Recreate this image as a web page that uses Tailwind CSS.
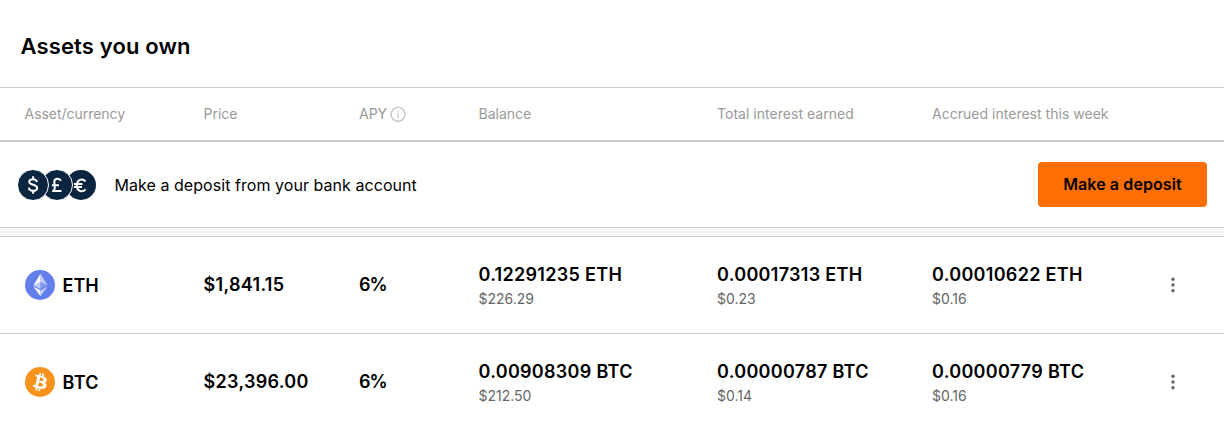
<!DOCTYPE html>
<html lang="en">
<head>
<meta charset="utf-8">
<title>Assets you own</title>
<script src="https://cdn.jsdelivr.net/npm/@tailwindcss/browser@4"></script>
</head>
<body class="bg-white text-black font-['Inter',sans-serif] w-[1224px] h-[424px] overflow-hidden">
<header class="h-[87px] pl-[20.5px] pt-[30px]"><h1 class="text-[22px] leading-8 font-semibold tracking-[0.14px] whitespace-nowrap">Assets you own</h1></header>
<div class="h-[55px] border-t border-b-2 border-[#cccccc] grid grid-cols-[179px_155.5px_119.5px_238.5px_215px_1fr] items-center pl-[24.5px] text-sm text-[#9a9a9a] whitespace-nowrap">
  <div class="tracking-[-0.03px]">Asset/currency</div>
  <div>Price</div>
  <div class="flex items-center gap-[2.5px]">APY
    <svg class="size-4" viewBox="0 0 16 16" fill="none" stroke="#c4c4c4"><circle cx="8" cy="8.3" r="6.9" stroke-width="1.4"/><path d="M8 7.1v5M8 4.3v1.3" stroke-width="1.3"/></svg>
  </div>
  <div>Balance</div>
  <div class="tracking-[0.03px]">Total interest earned</div>
  <div class="tracking-[0.02px]">Accrued interest this week</div>
</div>
<div class="h-[85px] flex items-center pl-[18px] pr-[17px]">
  <svg class="w-[78px] h-[30px]" viewBox="0 0 78 30" fill="none" stroke="#fff" stroke-linejoin="round">
    <circle cx="63" cy="15" r="15" fill="#0a2540" stroke="none"/>
    <path d="M67.6 11.4C64 7.7 58.8 9.7 58.8 15.4C58.8 21.1 64 23.1 67.6 19.4M56 13.9h8.5M56 17.1h8" stroke-width="2"/>
    <circle cx="39" cy="15" r="15.5" fill="#0a2540" stroke-width="1"/>
    <path d="M42.8 10.9C41.6 7.6 36.1 8 36.3 12C36.4 14.5 38.3 18.500 35 21.100H43.500M34 15.200h7" stroke-width="2"/>
    <circle cx="15" cy="15" r="15.5" fill="#0a2540" stroke-width="1"/>
    <path d="M19 12C18.300 8.200 11.200 8.300 11.200 11.800C11.200 15.800 19.200 13.700 19.200 17.900C19.200 21.700 11.300 21.800 10.800 17.600M15.100 6.300v3M15.100 20.700v3" stroke-width="2"/>
  </svg>
  <p class="ml-[18.5px] text-base tracking-[0.05px] whitespace-nowrap">Make a deposit from your bank account</p>
  <button class="ml-auto w-[169px] h-[45px] pb-[2px] rounded-[4px] bg-[#ff6e00] text-base font-semibold tracking-[0.1px]">Make a deposit</button>
</div>
<div class="h-[10px] border-y border-[#cccccc] bg-[#f7f7f7]"></div>
<div class="h-[97px] border-b border-[#cccccc] grid grid-cols-[179px_155.5px_119.5px_238.5px_215px_1fr_auto] items-center pl-[24.5px] pr-[47px] text-lg font-semibold tracking-[0.3px] whitespace-nowrap">
  <div class="flex items-center gap-[8px]">
    <svg class="size-[30px]" viewBox="0 0 32 32"><circle cx="16" cy="16" r="16" fill="#627eea"/><g fill="#fff"><path fill-opacity=".6" d="M16.498 4v8.87l7.497 3.35z"/><path d="M16.498 4L9 16.22l7.498-3.35z"/><path fill-opacity=".6" d="M16.498 21.968v6.027L24 17.616z"/><path d="M16.498 27.995v-6.028L9 17.616z"/><path fill-opacity=".2" d="M16.498 20.573l7.497-4.353-7.497-3.348z"/><path fill-opacity=".6" d="M9 16.22l7.498 4.353v-7.701z"/></g></svg>
    <span class="pt-[2px] tracking-normal">ETH</span>
  </div>
  <div>$1,841.15</div>
  <div class="tracking-[-1px]">6%</div>
  <div><div class="leading-7">0.12291235 ETH</div><div class="text-sm font-normal tracking-normal text-[#666666]">$226.29</div></div>
  <div><div class="leading-7">0.00017313 ETH</div><div class="text-sm font-normal tracking-normal text-[#666666]">$0.23</div></div>
  <div><div class="leading-7">0.00010622 ETH</div><div class="text-sm font-normal tracking-normal text-[#666666]">$0.16</div></div>
  <svg class="w-2 h-4" viewBox="0 0 8 16" fill="#666"><circle cx="4" cy="2.2" r="1.7"/><circle cx="4" cy="8" r="1.7"/><circle cx="4" cy="13.8" r="1.7"/></svg>
</div>
<div class="h-[96px] grid grid-cols-[179px_155.5px_119.5px_238.5px_215px_1fr_auto] items-center pl-[24.5px] pr-[47px] text-lg font-semibold tracking-[0.3px] whitespace-nowrap">
  <div class="flex items-center gap-[8px]">
    <svg class="size-[30px]" viewBox="0 0 32 32"><circle cx="16" cy="16" r="16" fill="#f7931a"/><path fill="#fff" d="M23.189 14.02c.314-2.096-1.283-3.223-3.465-3.975l.708-2.84-1.728-.43-.69 2.765c-.454-.114-.92-.22-1.385-.326l.695-2.783L15.596 6l-.708 2.839c-.376-.086-.746-.17-1.104-.26l.002-.009-2.384-.595-.46 1.846s1.283.294 1.256.312c.7.175.826.638.805 1.006l-.806 3.235c.048.012.11.03.18.057l-.183-.045-1.13 4.532c-.086.212-.303.531-.793.41.018.025-1.256-.313-1.256-.313l-.858 1.978 2.25.561c.418.105.828.215 1.231.318l-.715 2.872 1.727.43.708-2.84c.472.127.93.245 1.378.357l-.706 2.828 1.728.43.715-2.866c2.948.558 5.164.333 6.097-2.333.752-2.146-.037-3.385-1.588-4.192 1.13-.26 1.98-1.003 2.207-2.538zm-3.95 5.538c-.533 2.147-4.148.986-5.32.695l.95-3.805c1.172.293 4.929.872 4.37 3.11zm.535-5.569c-.487 1.953-3.495.96-4.47.717l.86-3.45c.975.243 4.118.696 3.61 2.733z"/></svg>
    <span class="pt-[2px]">BTC</span>
  </div>
  <div>$23,396.00</div>
  <div class="tracking-[-1px]">6%</div>
  <div><div class="leading-7">0.00908309 BTC</div><div class="text-sm font-normal tracking-normal text-[#666666]">$212.50</div></div>
  <div><div class="leading-7">0.00000787 BTC</div><div class="text-sm font-normal tracking-normal text-[#666666]">$0.14</div></div>
  <div><div class="leading-7">0.00000779 BTC</div><div class="text-sm font-normal tracking-normal text-[#666666]">$0.16</div></div>
  <svg class="w-2 h-4" viewBox="0 0 8 16" fill="#666"><circle cx="4" cy="2.2" r="1.7"/><circle cx="4" cy="8" r="1.7"/><circle cx="4" cy="13.8" r="1.7"/></svg>
</div>
</body>
</html>
